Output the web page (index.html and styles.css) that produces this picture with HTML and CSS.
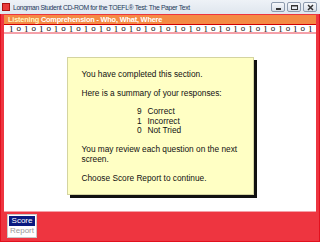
FILE: index.html
```html
<!DOCTYPE html>
<html>
<head>
<meta charset="utf-8">
<link rel="stylesheet" href="styles.css">
</head>
<body>
<div class="window">
  <div class="titlebar">
    <span class="appicon"></span>
    <span class="title">Longman Student CD-ROM for the TOEFL® Test: The Paper Text</span>
    <span class="controls">
      <span class="ctl"><svg width="9" height="7" viewBox="0 0 9 7"><rect x="2" y="4" width="5" height="2" fill="#333"/></svg></span>
      <span class="ctl"><svg width="9" height="7" viewBox="0 0 9 7"><rect x="1.5" y="1.5" width="6" height="4" fill="none" stroke="#333"/><rect x="1.5" y="1.5" width="6" height="1" fill="#333"/></svg></span>
      <span class="ctl"><svg width="9" height="7" viewBox="0 0 9 7"><path d="M2 1 L7 6 M7 1 L2 6" stroke="#333" stroke-width="1.5"/></svg></span>
    </span>
  </div>
  <div class="frame">
    <div class="header"><span class="hl">Listening</span> Comprehension - Who, What, Where</div>
    <div class="progress">
      <span>1</span><span class="o">o</span><span>1</span><span class="o">o</span><span>1</span><span class="o">o</span><span>1</span><span class="o">o</span><span>1</span><span class="o">o</span><span>1</span><span class="o">o</span><span>1</span><span class="o">o</span><span>1</span><span class="o">o</span><span>1</span><span class="o">o</span><span>1</span><span class="o">o</span><span>1</span><span class="o">o</span><span>1</span><span class="o">o</span><span>1</span><span class="o">o</span><span>1</span><span class="o">o</span><span>1</span><span class="o">o</span><span>1</span><span class="o">o</span><span>1</span><span class="o">o</span><span>1</span><span class="o">o</span><span>1</span><span class="o">o</span><span>1</span><span class="o">o</span><span>1</span>
    </div>
    <div class="main">
      <div class="card">
        <p>You have completed this section.</p>
        <p>Here is a summary of your responses:</p>
        <div class="summary">
          <div class="row"><span class="n">9</span><span>Correct</span></div>
          <div class="row"><span class="n">1</span><span>Incorrect</span></div>
          <div class="row"><span class="n">0</span><span>Not Tried</span></div>
        </div>
        <p>You may review each question on the next screen.</p>
        <p>Choose Score Report to continue.</p>
      </div>
    </div>
    <div class="footer">
      <div class="btn"><span class="sel">Score</span><span class="dim">Report</span></div>
    </div>
  </div>
</div>
</body>
</html>
```
FILE: styles.css
```css
* { box-sizing: border-box; }
html, body { margin: 0; padding: 0; }
body { width: 320px; height: 242px; overflow: hidden; background: #fff; font-family: "Liberation Sans", Arial, sans-serif; }
.window { width: 320px; height: 242px; display: flex; flex-direction: column; }
.titlebar { height: 14px; background: linear-gradient(#eef2f7, #dfe6ee); display: flex; align-items: center; padding-left: 2px; font-size: 6.8px; letter-spacing: -0.35px; color: #1e395b; }
.appicon { width: 8px; height: 8px; background: #e83a3a; border: 1px solid #a11; margin-right: 3px; }
.title { flex: 1; white-space: nowrap; overflow: hidden; }
.controls { display: flex; gap: 2px; margin-right: 3px; }
.ctl { width: 14px; height: 10px; border: 1px solid #8d9bae; border-radius: 2px; background: linear-gradient(#f6f8fb, #d8dfe8); display: flex; align-items: center; justify-content: center; }
.frame { flex: 1; background: #ee3540; border: 1px solid #e2101e; border-top: 0; display: flex; flex-direction: column; padding: 1px 3px 2px 3px; }
.header { height: 9px; background: #f48a44; color: #fff; font-size: 7.4px; letter-spacing: -0.2px; font-weight: bold; line-height: 9px; padding-left: 4px; white-space: nowrap; }
.hl { color: #fff8c0; }
.progress { height: 10px; background: #fff; border-top: 1px solid #d10000; border-bottom: 2px solid #f5a0a8; display: flex; align-items: center; justify-content: space-between; padding: 0 3px 0 5px; font-family: "Liberation Serif", serif; font-size: 9px; color: #111; line-height: 8px; overflow: hidden; }
.progress .o { font-family: "Liberation Sans", sans-serif; font-size: 8px; }
.main { flex: 1; background: #fff; display: flex; justify-content: center; align-items: flex-start; padding-top: 23px; border-bottom: 1px solid #f5a0a8; }
.card { width: 187px; height: 138px; background: #ffffc4; border: 1px solid #d4d4a0; box-shadow: 3px 3px 0 #111; padding: 12px 8px 0 14px; font-size: 8.3px; color: #111; line-height: 9.5px; }
.card p { margin: 0 0 9.5px 0; }
.summary { margin: -1px 0 9.5px 0; padding-left: 54px; }
.row { display: flex; gap: 6px; }
.n { width: 6px; text-align: right; }
.footer { height: 27px; display: flex; align-items: center; padding-left: 3px; }
.btn { width: 30px; height: 24px; background: #fff; border: 1px solid #c9c9c9; display: flex; flex-direction: column; align-items: center; padding-top: 1px; font-size: 8px; line-height: 10px; }
.sel { background: #0a1a80; color: #fff; width: 26px; text-align: center; }
.dim { color: #999; }
```
